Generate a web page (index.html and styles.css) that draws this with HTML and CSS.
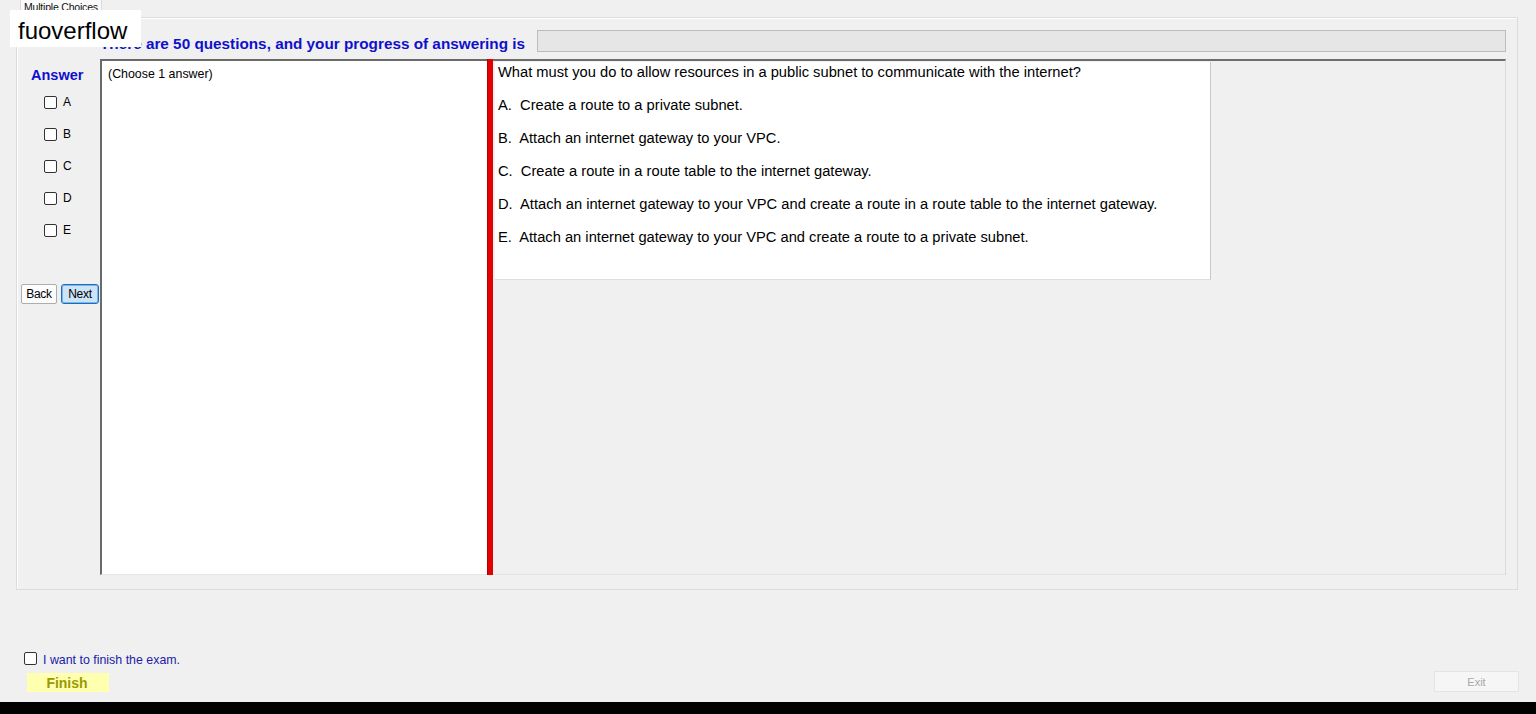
FILE: index.html
```html
<!DOCTYPE html>
<html lang="en">
<head>
  <meta charset="UTF-8">
  <meta name="viewport" content="width=device-width, initial-scale=1.0">
  <title>Exam</title>
  <link rel="stylesheet" href="styles.css">
</head>
<body>

  <div class="window">
    <div class="tabs">
      <span class="tab">Multiple Choices</span>
    </div>

    <div class="tabpage">
      <div class="head">
        <h1 class="progress-label">There are 50 questions, and your progress of answering is</h1>
        <div class="progress"></div>
      </div>

      <div class="main">
        <div class="answers">
          <div class="answers-title">Answer</div>
          <label class="option"><input type="checkbox"><span>A</span></label>
          <label class="option"><input type="checkbox"><span>B</span></label>
          <label class="option"><input type="checkbox"><span>C</span></label>
          <label class="option"><input type="checkbox"><span>D</span></label>
          <label class="option"><input type="checkbox"><span>E</span></label>

          <div class="nav">
            <button class="btn">Back</button>
            <button class="btn btn-active">Next</button>
          </div>
        </div>

        <div class="notes">(Choose 1 answer)</div>
        <div class="splitter"></div>

        <div class="question-pane">
          <div class="question">
            <p class="stem">What must you do to allow resources in a public subnet to communicate with the internet?</p>
            <p>A.  Create a route to a private subnet.</p>
            <p>B.  Attach an internet gateway to your VPC.</p>
            <p>C.  Create a route in a route table to the internet gateway.</p>
            <p>D.  Attach an internet gateway to your VPC and create a route in a route table to the internet gateway.</p>
            <p>E.  Attach an internet gateway to your VPC and create a route to a private subnet.</p>
          </div>
        </div>
      </div>
    </div>

    <div class="footer">
      <div class="finish-group">
        <label class="confirm"><input type="checkbox"><span>I want to finish the exam.</span></label>
        <div class="finish">Finish</div>
      </div>
      <button class="btn-exit" disabled>Exit</button>
    </div>
  </div>

  <div class="taskbar"></div>

  <div class="watermark">fuoverflow</div>

</body>
</html>
```

FILE: styles.css
```css
* {
  box-sizing: border-box;
}
body, html {
  margin: 0;
  padding: 0;
  font-family: "Liberation Sans", Arial, sans-serif;
  background-color: #f0f0f0;
  color: #000;
  overflow: hidden;
}

.window {
  height: 702px;
  display: flex;
  flex-direction: column;
}

/* tab header */
.tabs {
  height: 17px;
  padding-left: 20px;
  display: flex;
}
.tab {
  display: block;
  padding: 4px 3px 0 3px;
  margin-top: -3px;
  height: 20px;
  font-size: 10.5px;
  line-height: 11px;
  letter-spacing: -0.2px;
  background-color: #fafafa;
  border: 1px solid #dadada;
  border-bottom: none;
  color: #111;
}

.tabpage {
  margin-left: 16px;
  width: 1502px;
  height: 573px;
  border: 1px solid #dcdcdc;
  box-shadow: inset 1px 1px 0 #fff;
  padding: 12px 11px 0 0;
}

.head {
  display: flex;
  height: 22px;
  padding-left: 83px;
}
.progress-label {
  flex: 1;
  margin: 0;
  font-size: 15.3px;
  font-weight: bold;
  color: #1010cc;
  line-height: 28px;
  white-space: nowrap;
}
.progress {
  width: 969px;
  height: 22px;
  background-color: #e6e6e6;
  border: 1px solid #bcbcbc;
}

.main {
  display: flex;
  height: 516px;
  margin-top: 7px;
}

/* answer column */
.answers {
  width: 83px;
  display: flex;
  flex-direction: column;
  padding-top: 7px;
}
.answers-title {
  font-size: 14.5px;
  font-weight: bold;
  color: #1010cc;
  line-height: 18px;
  padding-left: 14px;
  margin-bottom: 12px;
}
.option {
  display: flex;
  align-items: center;
  height: 13px;
  margin-bottom: 19px;
  padding-left: 27px;
  font-size: 12px;
  line-height: 12px;
}
.option span {
  margin-left: 6px;
  margin-top: -2px;
}

input[type="checkbox"] {
  appearance: none;
  -webkit-appearance: none;
  margin: 0;
  width: 13px;
  height: 13px;
  border: 1px solid #333;
  border-radius: 2px;
  background-color: #fff;
  flex-shrink: 0;
}

.nav {
  display: flex;
  gap: 4px;
  margin-top: 28px;
  padding-left: 4px;
}
.btn {
  height: 20px;
  width: 36px;
  padding: 0;
  font-family: inherit;
  font-size: 12px;
  letter-spacing: -0.3px;
  background-color: #fdfdfd;
  border: 1px solid #adadad;
  border-radius: 2px;
  color: #000;
}
.btn-active {
  width: 38px;
  background-color: #cce4f7;
  border: 1px solid #1a6fb8;
  border-radius: 3px;
  box-shadow: inset 0 0 0 1px #7eb4ea;
}

/* notes box */
.notes {
  width: 387px;
  background-color: #fff;
  border-left: 2px solid #6a6a6a;
  border-top: 2px solid #6a6a6a;
  border-bottom: 1px solid #e6e6e6;
  font-size: 12.4px;
  padding: 5px 6px;
  line-height: 16px;
}

.splitter {
  width: 6px;
  background-color: #e20000;
  border-left: 1px solid #b00000;
}

/* question pane */
.question-pane {
  flex: 1;
  border-top: 2px solid #6d6d6d;
  border-right: 1px solid #dadada;
  border-bottom: 1px solid #e2e2e2;
  padding: 1px 0 0 2px;
}
.question {
  width: 716px;
  height: 218px;
  background-color: #fff;
  border-right: 1px solid #c8c8c8;
  border-bottom: 1px solid #dedede;
  padding-left: 3px;
  font-size: 14.7px;
  line-height: 20px;
}
.question p {
  margin: 13px 0 0 0;
  white-space: pre;
}
.question p.stem {
  margin-top: 0;
}

/* bottom area */
.footer {
  flex: 1;
  display: flex;
  justify-content: space-between;
  align-items: flex-end;
  padding: 0 17px 10px 24px;
}
.finish-group {
  display: flex;
  flex-direction: column;
}
.confirm {
  display: flex;
  align-items: center;
  height: 13px;
  font-size: 12.4px;
  color: #1c1ca8;
}
.confirm span {
  margin-left: 6px;
  margin-top: 3px;
}
.finish {
  margin: 8px 0 0 3px;
  width: 82px;
  height: 19px;
  background-color: #ffffb0;
  color: #9a9a00;
  font-size: 14px;
  font-weight: bold;
  text-align: center;
  line-height: 20px;
  padding-right: 2px;
}
.btn-exit {
  width: 85px;
  height: 21px;
  padding: 0;
  font-family: inherit;
  font-size: 11px;
  color: #a8a8a8;
  background-color: #f6f6f6;
  border: 1px solid #e4e4e4;
}

.taskbar {
  height: 12px;
  background-color: #000;
}

.watermark {
  position: absolute;
  left: 10px;
  top: 10px;
  width: 131px;
  height: 37px;
  background-color: #fff;
  font-size: 24px;
  line-height: 42px;
  padding-left: 8px;
  color: #000;
}
```
